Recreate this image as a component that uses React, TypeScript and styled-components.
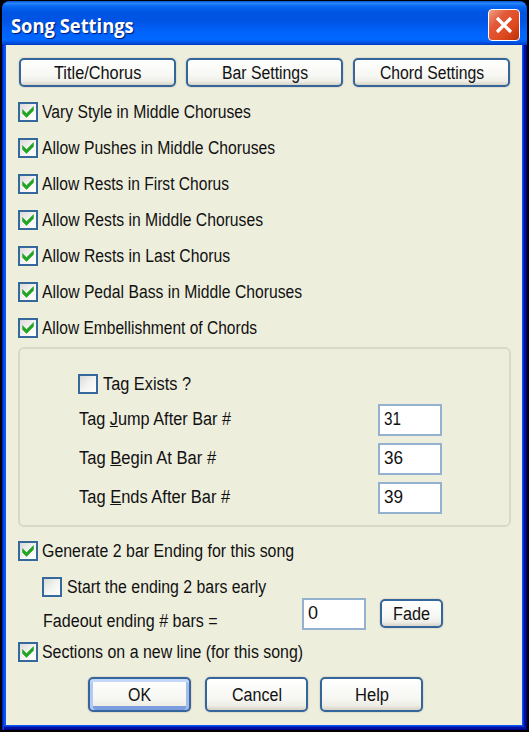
import { ReactNode, useLayoutEffect, useRef, useState } from "react";
import styled, { createGlobalStyle } from "styled-components";

const GlobalStyle = createGlobalStyle`
  * {
    box-sizing: border-box;
  }

  body {
    margin: 0;
    background: #000;
  }
`;

const Screen = styled.div`
  width: 529px;
  height: 732px;
  padding: 1px 2px 2px 2px;
  background: #000;
  overflow: hidden;
`;

const Window = styled.div`
  display: flex;
  flex-direction: column;
  width: 525px;
  height: 729px;
  padding: 0 5px 5px 4px;
  border-radius: 8px 8px 0 0;
  background: #0a54f0;
  box-shadow:
    inset 1px 0 #0020c0,
    inset 2px 0 #0040e4,
    inset -1px -1px #00007c,
    inset -3px -3px #0010a4,
    inset -4px -4px #0031d8;
  font-family: "Liberation Sans", Arial, sans-serif;
  font-size: 18px;
  line-height: 20px;
  color: #111;
`;

const TitleBar = styled.div`
  display: flex;
  align-items: center;
  justify-content: space-between;
  flex-shrink: 0;
  height: 44px;
  margin: 0 -5px 0 -4px;
  padding: 4px 7px 0 9px;
  border-radius: 8px 8px 0 0;
  background: linear-gradient(
    to bottom,
    #0a50d0 0%,
    #2a86fc 5%,
    #0868f0 12%,
    #0054e2 25%,
    #0054e4 45%,
    #0062fa 68%,
    #0068ff 88%,
    #0050e0 95%,
    #0038c0 100%
  );
`;

const Title = styled.div`
  padding-top: 1px;
  font-family: "Open Sans", "Noto Sans", sans-serif;
  font-size: 20px;
  font-weight: bold;
  color: #fff;
  text-shadow: 1px 1px 1px #001470;
`;

const CloseButton = styled.button`
  width: 32px;
  height: 32px;
  padding: 0;
  border: 1.5px solid #fff;
  border-radius: 4px;
  background: linear-gradient(135deg, #f0a088 0%, #e25a3a 32%, #e04a20 65%, #bc3008 100%);

  svg {
    display: block;
    margin: auto;
  }
`;

const Body = styled.div`
  flex: 1;
  display: flex;
  flex-direction: column;
  padding: 13px 12px 0;
  background: #eeeedd;
`;

const TopButtons = styled.div`
  display: flex;
  gap: 10px;
  padding-left: 1px;
`;

const Button = styled.button<{ $width: number; $height: number; $primary?: boolean }>`
  display: flex;
  align-items: center;
  justify-content: center;
  flex-shrink: 0;
  width: ${(p) => p.$width}px;
  height: ${(p) => p.$height}px;
  padding: 1px 0 0;
  border: 2px solid #35669b;
  border-radius: 5px;
  background: linear-gradient(to bottom, #fff 0%, #f6f6f2 65%, #eeede6 85%, #d8d2c6 100%);
  box-shadow: ${(p) =>
    p.$primary
      ? "inset 0 3px #c4d8fa, inset 3px 0 #b4caf2, inset -3px 0 #a4bcec, inset 0 -4px #7c9ce0, 0 0 1px 1px #dfdacb"
      : "0 0 1px 1px #e0dccd"};
  font: inherit;
  color: inherit;
`;

const CheckRow = styled.label<{ $indent?: number; $gap?: number }>`
  display: flex;
  align-items: center;
  gap: ${(p) => p.$gap ?? 4}px;
  height: 20px;
  margin-left: ${(p) => p.$indent ?? 0}px;
`;

const Box = styled.span`
  display: flex;
  align-items: center;
  justify-content: center;
  flex-shrink: 0;
  width: 20px;
  height: 20px;
  border: 2px solid #36699b;
  background: linear-gradient(135deg, #dadad6 0%, #f3f3f1 50%, #fff 100%);
`;

const Options = styled.div<{ $top?: number }>`
  display: flex;
  flex-direction: column;
  gap: 16px;
  margin-top: ${(p) => p.$top ?? 15}px;
`;

const TagGroup = styled.div`
  height: 180px;
  margin-top: 9px;
  width: 493px;
  padding: 25px 67px 0 58px;
  border: 2px solid #d9d9c6;
  border-radius: 6px;
`;

const TagFields = styled.div`
  display: flex;
  flex-direction: column;
  gap: 7px;
  margin-top: 10px;
`;

const TagField = styled.div`
  display: flex;
  justify-content: space-between;
  padding-left: 1px;
`;

const Input = styled.div`
  flex-shrink: 0;
  width: 64px;
  height: 32px;
  padding: 3px 0 0 4px;
  border: 2px solid #94b1cf;
  background: #fff;
`;

const FieldLabel = styled.div`
  padding-top: 5px;
`;

const FadeRow = styled.div`
  display: flex;
  margin: 1px 0 0 24px;
`;

const FadeLabel = styled.div`
  width: 260px;
  padding: 13px 0 0 1px;
`;

const FadeButtonSlot = styled.div`
  padding: 1px 0 0 14px;
`;

const Footer = styled.div`
  display: grid;
  grid-template-columns: 117px 115px 103px;
  margin-top: 15px;
  padding-left: 70px;
`;

const TextSlot = styled.span`
  display: block;
  height: 20px;
  white-space: nowrap;
`;

const TextRun = styled.span`
  display: inline-block;
  transform-origin: 0 50%;
`;

// Squeezes a label horizontally so that it takes exactly the given width.
function Text({ width, children }: { width: number; children: ReactNode }) {
  const ref = useRef<HTMLSpanElement>(null);
  const [scale, setScale] = useState(1);

  useLayoutEffect(() => {
    if (ref.current) {
      setScale(width / ref.current.offsetWidth);
    }
  }, [width]);

  return (
    <TextSlot style={{ width }}>
      <TextRun ref={ref} style={{ transform: `scaleX(${scale})` }}>
        {children}
      </TextRun>
    </TextSlot>
  );
}

type CheckProps = {
  label: string;
  width: number;
  checked?: boolean;
  indent?: number;
  gap?: number;
};

function Check({ label, width, checked, indent, gap }: CheckProps) {
  return (
    <CheckRow $indent={indent} $gap={gap}>
      <Box>
        {checked && (
          <svg width="12" height="12" viewBox="0 0 12 12">
            <path d="M0.5 3.5v4l4 4 7-7v-4l-7 7z" fill="#22a322" stroke="#22a322" strokeWidth="0.5" />
          </svg>
        )}
      </Box>
      <Text width={width}>{label}</Text>
    </CheckRow>
  );
}

const OPTIONS = [
  { label: "Vary Style in Middle Choruses", width: 209 },
  { label: "Allow Pushes in Middle Choruses", width: 233 },
  { label: "Allow Rests in First Chorus", width: 187 },
  { label: "Allow Rests in Middle Choruses", width: 221 },
  { label: "Allow Rests in Last Chorus", width: 188 },
  { label: "Allow Pedal Bass in Middle Choruses", width: 260 },
  { label: "Allow Embellishment of Chords", width: 215 },
];

export default function App() {
  return (
    <Screen>
      <GlobalStyle />
      <Window>
        <TitleBar>
          <Title>
            <Text width={123}>Song Settings</Text>
          </Title>
          <CloseButton aria-label="Close">
            <svg width="18" height="18" viewBox="0 0 18 18">
              <path d="M2 2l14 14M16 2L2 16" stroke="#fff" strokeWidth="3.2" />
            </svg>
          </CloseButton>
        </TitleBar>
        <Body>
          <TopButtons>
            <Button $width={157} $height={29}>
              <Text width={87}>Title/Chorus</Text>
            </Button>
            <Button $width={157} $height={29}>
              <Text width={86}>Bar Settings</Text>
            </Button>
            <Button $width={157} $height={29}>
              <Text width={104}>Chord Settings</Text>
            </Button>
          </TopButtons>
          <Options>
            {OPTIONS.map((option) => (
              <Check key={option.label} checked {...option} />
            ))}
          </Options>
          <TagGroup>
            <Check label="Tag Exists ?" width={88} gap={5} />
            <TagFields>
              <TagField>
                <FieldLabel>
                  <Text width={152}>
                    Tag <u>J</u>ump After Bar #
                  </Text>
                </FieldLabel>
                <Input>
                  <Text width={17}>31</Text>
                </Input>
              </TagField>
              <TagField>
                <FieldLabel>
                  <Text width={137}>
                    Tag <u>B</u>egin At Bar #
                  </Text>
                </FieldLabel>
                <Input>
                  <Text width={19}>36</Text>
                </Input>
              </TagField>
              <TagField>
                <FieldLabel>
                  <Text width={151}>
                    Tag <u>E</u>nds After Bar #
                  </Text>
                </FieldLabel>
                <Input>
                  <Text width={19}>39</Text>
                </Input>
              </TagField>
            </TagFields>
          </TagGroup>
          <Options $top={14}>
            <Check label="Generate 2 bar Ending for this song" width={252} checked />
            <Check label="Start the ending 2 bars early" width={199} indent={24} gap={5} />
          </Options>
          <FadeRow>
            <FadeLabel>
              <Text width={175}>Fadeout ending # bars =</Text>
            </FadeLabel>
            <Input>
              <Text width={10}>0</Text>
            </Input>
            <FadeButtonSlot>
              <Button $width={63} $height={29}>
                <Text width={37}>Fade</Text>
              </Button>
            </FadeButtonSlot>
          </FadeRow>
          <Options $top={11}>
            <Check label="Sections on a new line (for this song)" width={261} checked />
          </Options>
          <Footer>
            <Button $width={103} $height={35} $primary>
              <Text width={23}>OK</Text>
            </Button>
            <Button $width={103} $height={35}>
              <Text width={50}>Cancel</Text>
            </Button>
            <Button $width={103} $height={35}>
              <Text width={34}>Help</Text>
            </Button>
          </Footer>
        </Body>
      </Window>
    </Screen>
  );
}
